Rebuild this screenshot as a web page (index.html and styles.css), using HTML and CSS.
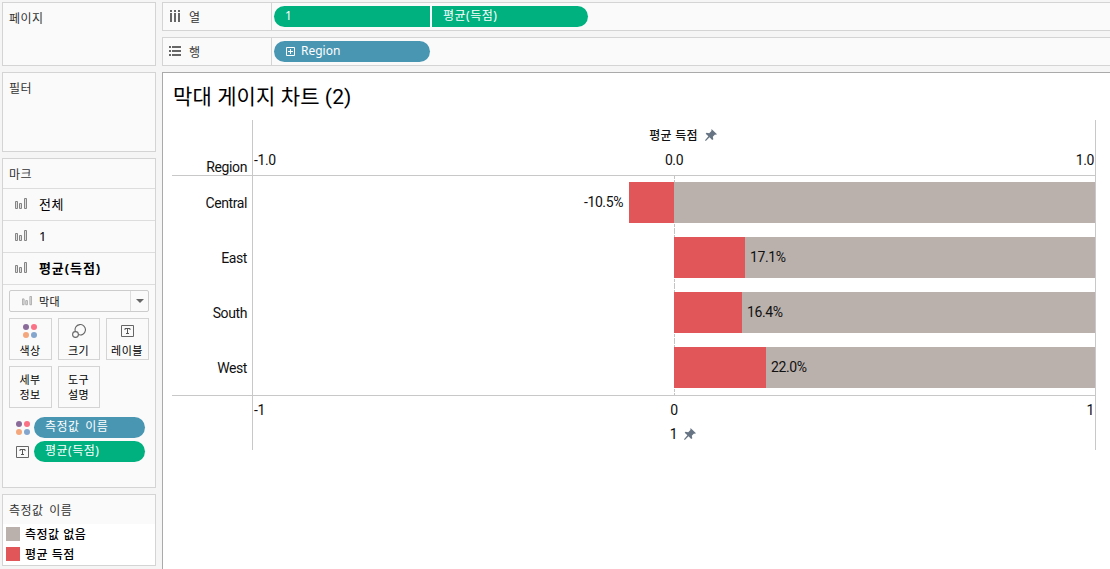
FILE: index.html
```html
<!DOCTYPE html>
<html lang="ko">
<head>
<meta charset="UTF-8">
<title>막대 게이지 차트 (2)</title>
<link rel="stylesheet" href="styles.css">
</head>
<body>
<svg class="defs" width="0" height="0">
  <symbol id="bars" viewBox="0 0 12 12">
    <path d="M.5 3.5h2v7h-2zM4.5 5.5h2v5h-2zM9.5 .5h2v10h-2z" fill="#ddd" stroke="#858585"/>
  </symbol>
  <symbol id="dots" viewBox="0 0 14 14">
    <circle cx="3" cy="3" r="3" fill="#8a6b9a"/>
    <circle cx="11" cy="3" r="3" fill="#fb7185"/>
    <circle cx="3" cy="11" r="3" fill="#f4a77c"/>
    <circle cx="11" cy="11" r="3" fill="#84a5cd"/>
  </symbol>
  <symbol id="label" viewBox="0 0 13 12">
    <path d="M.5 .5h12v11h-12z" fill="none" stroke="#666"/>
    <path d="M4 5V3.5h5V5M6.5 3.5v5M5 8.5h3" fill="none" stroke="#555"/>
  </symbol>
  <symbol id="pin" viewBox="0 0 12 12">
    <path d="M6.5 0L12 5.3 10.8 5.8 10 5.5 7.8 7.8 8.3 10.2 7.2 11 4.5 8.3 .8 12 0 11.2 3.4 7.2 .7 4.8 1.5 3.8 4.2 4.2 6.4 2z" fill="#677483"/>
  </symbol>
</svg>
<div class="app">
  <div class="sidebar">
    <div class="panel pages">페이지</div>
    <div class="panel filters">필터</div>
    <div class="panel marks">
      <div class="marks-title">마크</div>
      <div class="mark-row"><svg width="12" height="12"><use href="#bars"/></svg><span>전체</span></div>
      <div class="mark-row"><svg width="12" height="12"><use href="#bars"/></svg><span class="num">1</span></div>
      <div class="mark-row active"><svg width="12" height="12"><use href="#bars"/></svg><span>평균(득점)</span></div>
      <div class="combo">
        <svg width="10" height="10"><use href="#bars"/></svg>
        <span>막대</span>
        <i class="arrow"></i>
      </div>
      <div class="buttons">
        <div class="btn"><svg width="14" height="14"><use href="#dots"/></svg><span>색상</span></div>
        <div class="btn">
          <svg width="14" height="14" viewBox="0 0 14 14" fill="none" stroke="#666" stroke-width="1.1"><path d="M3.4 7.6A5.2 5.2 0 1 1 6.4 10.6"/><circle cx="3.5" cy="10.5" r="2.9"/></svg>
          <span>크기</span>
        </div>
        <div class="btn"><svg width="13" height="14"><use href="#label"/></svg><span>레이블</span></div>
        <div class="btn text">세부<br>정보</div>
        <div class="btn text">도구<br>설명</div>
      </div>
      <div class="encoding"><svg width="14" height="14"><use href="#dots"/></svg><div class="pill blue">측정값 이름</div></div>
      <div class="encoding"><svg width="13" height="12"><use href="#label"/></svg><div class="pill green">평균(득점)</div></div>
    </div>
    <div class="panel legend">
      <div class="legend-title">측정값 이름</div>
      <div class="legend-items">
        <div class="legend-item"><i class="swatch gray"></i><span>측정값 없음</span></div>
        <div class="legend-item"><i class="swatch red"></i><span>평균 득점</span></div>
      </div>
    </div>
  </div>

  <div class="main">
    <div class="shelf">
      <div class="shelf-name">
        <svg width="12" height="13" viewBox="0 0 12 13" fill="#666"><path d="M1 0h2v2H1zM5 0h2v2H5zM9 0h2v2H9zM1 3h2v9H1zM5 3h2v9H5zM9 3h2v9H9z"/></svg>
        <span>열</span>
      </div>
      <div class="shelf-pills">
        <div class="pill green first">1</div>
        <div class="pill green last">평균(득점)</div>
      </div>
    </div>
    <div class="shelf">
      <div class="shelf-name">
        <svg width="12" height="13" viewBox="0 0 12 13" fill="#666"><path d="M0 1h2v2H0zM0 5h2v2H0zM0 9h2v2H0zM3 1h9v2H3zM3 5h9v2H3zM3 9h9v2H3z"/></svg>
        <span>행</span>
      </div>
      <div class="shelf-pills">
        <div class="pill blue">
          <svg width="9" height="9" viewBox="0 0 9 9" fill="none" stroke="#fff"><path d="M.5 .5h8v8h-8zM4.5 2v5M2 4.5h5"/></svg>
          <span class="region">Region</span>
        </div>
      </div>
    </div>

    <div class="view">
      <h1>막대 게이지 차트 (2)</h1>
      <div class="chart">
        <div class="row head">
          <div class="name">Region</div>
          <div class="axis">
            <div class="axis-title"><span class="ko">평균 득점</span><svg width="12" height="12"><use href="#pin"/></svg></div>
            <div class="ticks"><span>-1.0</span><span>0.0</span><span>1.0</span></div>
          </div>
        </div>
        <div class="row">
          <div class="name">Central</div>
          <div class="plot"><span class="value left">-10.5%</span><i class="bar red" style="width: 45px"></i><i class="bar gray"></i></div>
        </div>
        <div class="row">
          <div class="name">East</div>
          <div class="plot"><i class="bar red" style="width: 71px"></i><div class="bar gray"><span class="value">17.1%</span></div></div>
        </div>
        <div class="row">
          <div class="name">South</div>
          <div class="plot"><i class="bar red" style="width: 68px"></i><div class="bar gray"><span class="value">16.4%</span></div></div>
        </div>
        <div class="row last-row">
          <div class="name">West</div>
          <div class="plot"><i class="bar red" style="width: 92px"></i><div class="bar gray"><span class="value">22.0%</span></div></div>
        </div>
        <div class="row foot">
          <div class="name"></div>
          <div class="axis">
            <div class="ticks"><span>-1</span><span>0</span><span>1</span></div>
            <div class="axis-title"><span>1</span><svg width="12" height="12"><use href="#pin"/></svg></div>
          </div>
        </div>
      </div>
    </div>
  </div>
</div>
</body>
</html>
```
FILE: styles.css
```css
* {
  box-sizing: border-box;
}

body {
  margin: 0;
  background: #f5f5f5;
  font-family: "Noto Sans", "Noto Sans CJK KR", sans-serif;
  font-size: 12px;
  line-height: 16px;
  letter-spacing: 0.5px;
  word-spacing: 2px;
  color: #333;
  overflow: hidden;
}

svg {
  display: block;
  flex: none;
}

.defs {
  display: none;
}

.app {
  display: flex;
  gap: 6px;
  height: 569px;
  padding: 2px 0 0 2px;
}

.sidebar {
  width: 154px;
  display: flex;
  flex-direction: column;
  gap: 6px;
}

.panel {
  flex: none;
  background: #fafafa;
  border: 1px solid #d4d4d4;
}

.pages {
  height: 64px;
  padding: 8px 6px;
}

.filters {
  height: 80px;
  padding: 8px 6px;
}

.marks {
  height: 330px;
}

.marks-title {
  height: 30px;
  padding: 8px 6px 6px;
  border-bottom: 1px solid #ddd;
}

.mark-row {
  height: 32px;
  display: flex;
  align-items: center;
  padding: 0 0 1px 12px;
  gap: 12px;
  border-bottom: 1px solid #ddd;
  font-size: 13px;
  color: #000;
}

.active {
  font-weight: bold;
  letter-spacing: 0.9px;
}

.combo {
  display: flex;
  align-items: center;
  width: 140px;
  height: 22px;
  margin: 5px 0 6px 6px;
  padding-left: 12px;
  gap: 7px;
  border: 1px solid #ccc;
  border-radius: 2px;
  font-size: 11px;
  color: #111;
}

.combo span {
  padding-top: 2px;
}

.combo svg {
  opacity: 0.75;
}

.arrow {
  width: 18px;
  height: 20px;
  margin-left: auto;
  border-left: 1px solid #ddd;
  display: flex;
  align-items: center;
  justify-content: center;
}

.arrow::after {
  content: "";
  border: 4px solid transparent;
  border-top-color: #666;
  border-bottom: 0;
}

.buttons {
  display: grid;
  grid-template-columns: 43px 42px 43px;
  gap: 6px;
  margin: 0 0 9px 6px;
}

.btn {
  height: 42px;
  padding: 5px 1px 0 0;
  display: flex;
  flex-direction: column;
  align-items: center;
  gap: 5px;
  border: 1px solid #d4d4d4;
  font-size: 11px;
  line-height: 15px;
  color: #000;
}

.btn.text {
  display: block;
  text-align: center;
}

.encoding {
  display: grid;
  grid-template-columns: 14px 111px;
  gap: 4px;
  align-items: center;
  margin: 0 0 3px 13px;
}

.pill {
  height: 21px;
  padding-left: 11px;
  border-radius: 11px;
  line-height: 19px;
  color: #fff;
}

.green {
  background: #00b180;
}

.blue {
  background: #4996b2;
}

.legend {
  height: 72px;
}

.legend-title {
  height: 29px;
  padding: 8px 6px 5px;
}

.legend-items {
  height: 41px;
  background: #fff;
}

.legend-item {
  height: 20px;
  display: flex;
  align-items: center;
  gap: 5px;
  padding-left: 3px;
  color: #000;
  font-weight: 500;
  word-spacing: 0;
}

.legend-item span {
  padding-top: 2px;
}

.swatch {
  width: 14px;
  height: 14px;
}

.gray {
  background: #bab0ac;
}

.red {
  background: #e15759;
}

.main {
  flex: 1;
  display: flex;
  flex-direction: column;
  gap: 6px;
}

.shelf {
  display: flex;
  height: 29px;
  background: #fafafa;
  border: 1px solid #d4d4d4;
  border-right: 0;
}

.shelf-name {
  display: flex;
  align-items: center;
  width: 109px;
  padding-left: 6px;
  gap: 8px;
  border-right: 1px solid #d4d4d4;
}

.shelf-name span {
  padding-top: 2px;
}

.shelf-pills {
  display: flex;
  gap: 2px;
  padding: 3px 2px;
}

.shelf .pill {
  display: flex;
  width: 156px;
}

.shelf .pill svg {
  margin: 6px 6px 0 1px;
}

.region {
  letter-spacing: 0;
}

.shelf .first {
  border-radius: 11px 0 0 11px;
}

.shelf .last {
  border-radius: 0 11px 11px 0;
}

.view {
  flex: 1;
  background: #fff;
  border-left: 1px solid #aaa;
  border-top: 1px solid #aaa;
  padding-left: 9px;
  font-family: Roboto, "Noto Sans CJK KR", sans-serif;
  font-size: 14px;
  letter-spacing: -0.4px;
  word-spacing: 0;
  color: #111;
}

h1 {
  margin: 0 0 0 1px;
  height: 47px;
  padding-top: 10px;
  font-size: 21px;
  line-height: 28px;
  letter-spacing: 0.1px;
  font-weight: normal;
  color: #000;
}

.row {
  display: flex;
  width: 924px;
  height: 55px;
}

.name {
  width: 80px;
  padding: 19px 5px 0 0;
  text-align: right;
}

.axis,
.plot {
  width: 844px;
  border: solid #c8c8c8;
  border-width: 0 1px;
}

.head {
  height: 56px;
  border-bottom: 1px solid #c8c8c8;
}

.head .name {
  padding-top: 39px;
}

.axis-title {
  display: flex;
  justify-content: center;
  align-items: center;
  gap: 7px;
  height: 16px;
  margin-top: 7px;
  padding-left: 18px;
}

.axis-title .ko {
  padding-top: 2px;
  font-size: 12px;
  font-weight: 500;
  letter-spacing: 0.3px;
}

.ticks {
  display: grid;
  grid-template-columns: 1fr 1fr 1fr;
  padding: 0 1px;
  margin-top: 9px;
}

.ticks span:nth-child(2) {
  text-align: center;
}

.ticks span:last-child {
  text-align: right;
}

.plot {
  display: flex;
  padding: 6px 0 8px 421px;
  background: repeating-linear-gradient(#c4c4c4 0 3px, #fff 3px 4px) 421px 0 / 1px 100% no-repeat;
}

/* negative value: the label and the bar sit left of zero */
.plot:has(.left) {
  padding-left: 0;
}

.left {
  width: 376px;
  padding-right: 6px;
  text-align: right;
}

.bar {
  height: 41px;
}

.bar.gray {
  flex: 1;
}

.value {
  line-height: 41px;
}

.bar .value {
  margin-left: 5px;
}

.last-row {
  height: 54px;
}

.foot {
  border-top: 1px solid #c8c8c8;
}

.foot .ticks {
  margin-top: 6px;
}

.foot .axis-title {
  margin-top: 8px;
}
```
